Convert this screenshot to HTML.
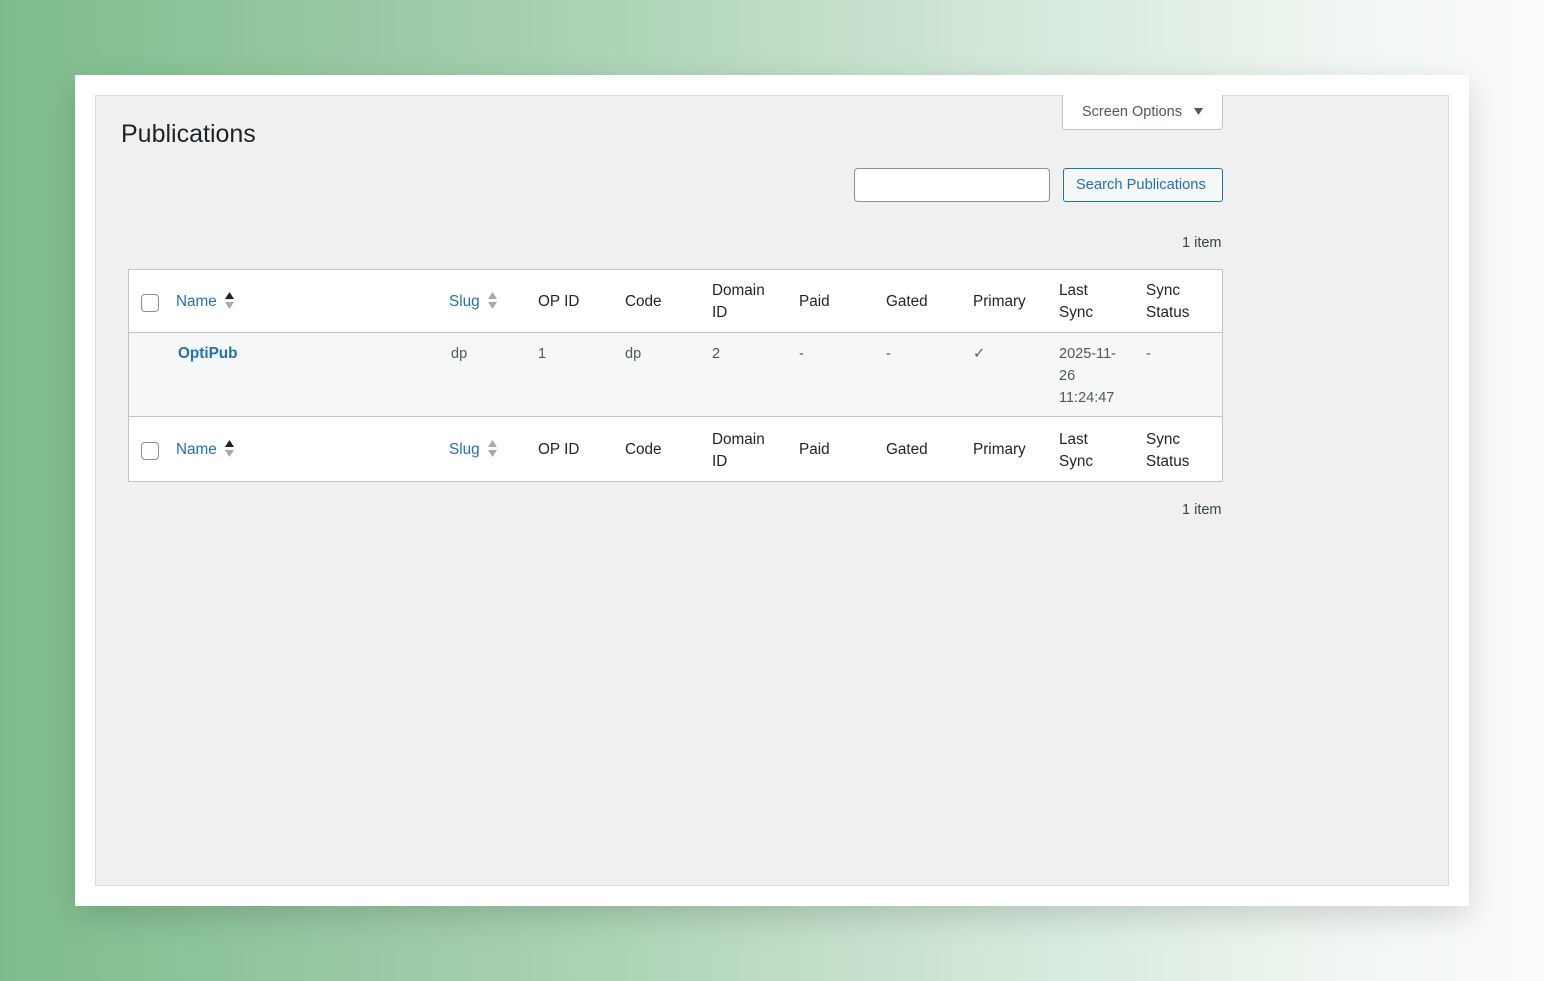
<!DOCTYPE html>
<html><head><meta charset="utf-8"><style>
*{margin:0;padding:0;box-sizing:border-box}
body{width:1544px;height:981px;overflow:hidden;position:relative;font-family:"Liberation Sans",sans-serif;color:#1d2327;
background:linear-gradient(90deg,#7fbc8c 0%,#a6d0b0 35%,#d3e8d9 65%,#f4f8f5 90%,#fafcfa 100%)}
.a{position:absolute;white-space:nowrap}
.card{position:absolute;left:75px;top:75px;width:1394px;height:831px;background:#fff;box-shadow:0 10px 30px rgba(0,0,0,.15)}
.panel{position:absolute;left:95px;top:95px;width:1354px;height:791px;background:#f0f0f1;border:1px solid #dcdcde}
.t{font-size:15.3px;line-height:22px}
.blue{color:#2271b1}
.g{color:#50575e}
.cb{position:absolute;width:18px;height:18px;border:1px solid #8c8f94;border-radius:4px;background:#fff}
svg{position:absolute}
</style></head><body>
<div class="card"></div>
<div class="panel"></div>
<div class="a" style="left:121px;top:120px;font-size:25px;color:#1d2327">Publications</div>
<div class="a" style="left:1062px;top:95px;width:161px;height:35px;background:#fff;border:1px solid #c3c4c7;border-top:none;border-radius:0 0 4px 4px;font-size:14.5px;color:#50575e;padding:9px 0 0 19px">Screen Options</div>
<svg style="left:1194px;top:108px" width="10" height="8"><path d="M0 0H9L4.5 7Z" fill="#50575e"/></svg>
<div class="a" style="left:854px;top:168px;width:196px;height:34px;background:#fff;border:1px solid #8c8f94;border-radius:4px"></div>
<div class="a" style="left:1063px;top:168px;width:160px;height:34px;background:#f6f7f7;border:1px solid #2271b1;border-radius:3px;font-size:14.7px;color:#2271b1;padding:8px 0 0 12px">Search Publications</div>
<div class="a" style="left:1182px;top:235px;font-size:14.5px;color:#3c434a">1 item</div>
<div class="a" style="left:1182px;top:502px;font-size:14.5px;color:#3c434a">1 item</div>
<div class="a" style="left:128px;top:269px;width:1095px;height:213px;background:#fff;border:1px solid #c3c4c7"></div>
<div class="a" style="left:129px;top:332px;width:1093px;height:85px;background:#f6f7f7;border-top:1px solid #c3c4c7;border-bottom:1px solid #c3c4c7"></div>

<div class="cb" style="left:141px;top:294px"></div>
<div class="cb" style="left:141px;top:442px"></div>

<div class="a t blue" style="left:176px;top:291px">Name</div>
<svg style="left:224px;top:292px" width="11" height="18"><path d="M1 7H10L5.5 0Z" fill="#1d2327"/><path d="M1 10H10L5.5 17Z" fill="#a7aaad"/></svg>
<div class="a t blue" style="left:449px;top:291px">Slug</div>
<svg style="left:487px;top:292px" width="11" height="18"><path d="M1 7H10L5.5 0Z" fill="#a7aaad"/><path d="M1 10H10L5.5 17Z" fill="#a7aaad"/></svg>
<div class="a t" style="left:538px;top:291px">OP ID</div>
<div class="a t" style="left:625px;top:291px">Code</div>
<div class="a t" style="left:712px;top:280px">Domain<br>ID</div>
<div class="a t" style="left:799px;top:291px">Paid</div>
<div class="a t" style="left:886px;top:291px">Gated</div>
<div class="a t" style="left:973px;top:291px">Primary</div>
<div class="a t" style="left:1059px;top:280px">Last<br>Sync</div>
<div class="a t" style="left:1146px;top:280px">Sync<br>Status</div>

<div class="a t blue" style="left:178px;top:343px;font-weight:bold">OptiPub</div>
<div class="a t g" style="left:451px;top:343px;font-size:14.5px">dp</div>
<div class="a t g" style="left:538px;top:343px;font-size:14.5px">1</div>
<div class="a t g" style="left:625px;top:343px;font-size:14.5px">dp</div>
<div class="a t g" style="left:712px;top:343px;font-size:14.5px">2</div>
<div class="a t g" style="left:799px;top:343px;font-size:14.5px">-</div>
<div class="a t g" style="left:886px;top:343px;font-size:14.5px">-</div>
<div class="a t g" style="left:973px;top:343px;font-size:14.5px">✓</div>
<div class="a t g" style="left:1059px;top:343px;font-size:14.5px">2025-11-<br>26<br>11:24:47</div>
<div class="a t g" style="left:1146px;top:343px;font-size:14.5px">-</div>

<div class="a t blue" style="left:176px;top:439px">Name</div>
<svg style="left:224px;top:440px" width="11" height="18"><path d="M1 7H10L5.5 0Z" fill="#1d2327"/><path d="M1 10H10L5.5 17Z" fill="#a7aaad"/></svg>
<div class="a t blue" style="left:449px;top:439px">Slug</div>
<svg style="left:487px;top:440px" width="11" height="18"><path d="M1 7H10L5.5 0Z" fill="#a7aaad"/><path d="M1 10H10L5.5 17Z" fill="#a7aaad"/></svg>
<div class="a t" style="left:538px;top:439px">OP ID</div>
<div class="a t" style="left:625px;top:439px">Code</div>
<div class="a t" style="left:712px;top:429px">Domain<br>ID</div>
<div class="a t" style="left:799px;top:439px">Paid</div>
<div class="a t" style="left:886px;top:439px">Gated</div>
<div class="a t" style="left:973px;top:439px">Primary</div>
<div class="a t" style="left:1059px;top:429px">Last<br>Sync</div>
<div class="a t" style="left:1146px;top:429px">Sync<br>Status</div>
</body></html>
